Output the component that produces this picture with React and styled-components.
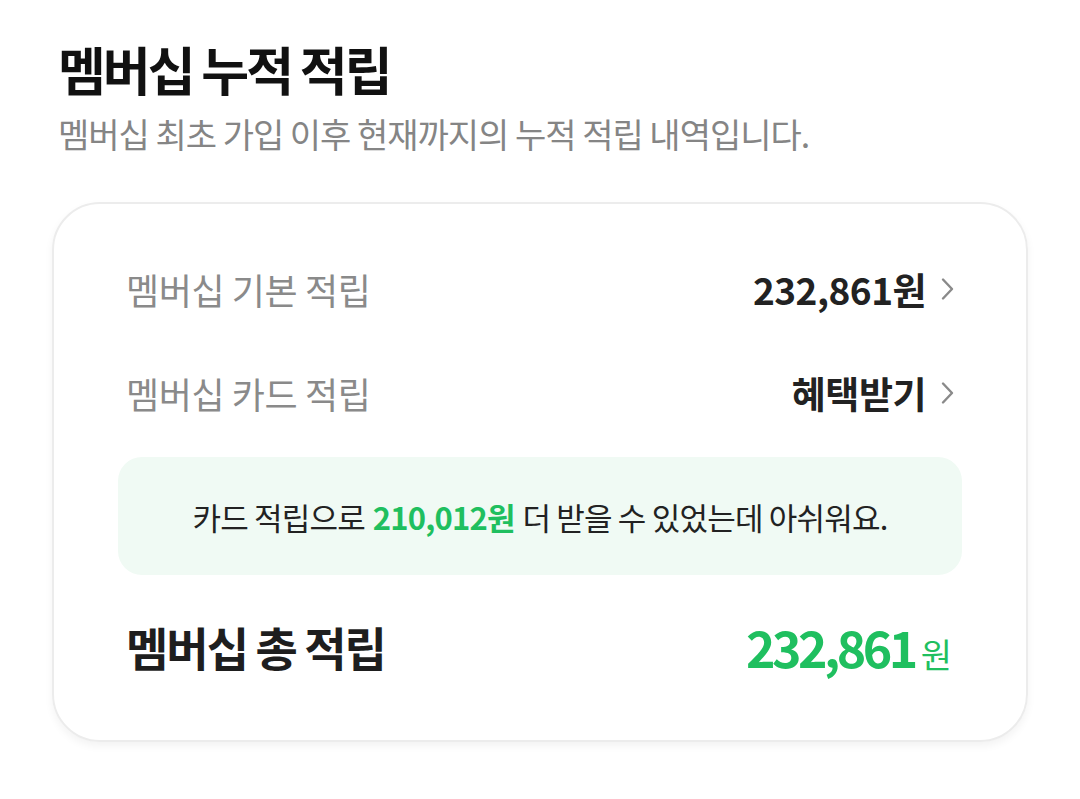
import React from 'react';
import styled, { createGlobalStyle } from 'styled-components';

const GlobalStyle = createGlobalStyle`
  body {
    margin: 0;
    background: #fff;
    font-family: 'Noto Sans CJK KR', 'Noto Sans', sans-serif;
    color: #222;
  }
`;

const rows = [
  { label: '멤버십 기본 적립', value: '232,861원' },
  { label: '멤버십 카드 적립', value: '혜택받기' },
];

const Chevron = () => (
  <svg width="17" height="26" viewBox="0 0 17 26" fill="none">
    <path d="M4 3.5l9 9.5-9 9.5" stroke="#8a8a8a" strokeWidth="2.4" strokeLinecap="round" strokeLinejoin="round" />
  </svg>
);

const App = () => {
  return (
    <>
      <GlobalStyle />
      <Page>
        <Header>
          <Title>멤버십 누적 적립</Title>
          <Subtitle>멤버십 최초 가입 이후 현재까지의 누적 적립 내역입니다.</Subtitle>
        </Header>

        <Card>
          {rows.map((row) => (
            <Row key={row.label}>
              <RowLabel>{row.label}</RowLabel>
              <RowValue>
                {row.value}
                <Chevron />
              </RowValue>
            </Row>
          ))}

          <Notice>
            카드 적립으로 <Green>210,012원</Green> 더 받을 수 있었는데 아쉬워요.
          </Notice>

          <TotalRow>
            <TotalLabel>멤버십 총 적립</TotalLabel>
            <TotalValue>
              232,861<Unit>원</Unit>
            </TotalValue>
          </TotalRow>
        </Card>
      </Page>
    </>
  );
};

export default App;

const Page = styled.div`
  width: 1080px;
  height: 799px;
  box-sizing: border-box;
  padding: 32px 52px 0;
`;

const Header = styled.div`
  display: flex;
  flex-direction: column;
  padding-left: 6px;
  margin-bottom: 40px;
`;

const Title = styled.h1`
  margin: 0;
  font-size: 52px;
  font-weight: 700;
  line-height: 74px;
  letter-spacing: -3px;
  color: #111;
`;

const Subtitle = styled.p`
  margin: 0;
  font-size: 34px;
  font-weight: 400;
  line-height: 56px;
  letter-spacing: -1px;
  color: #858585;
`;

const Card = styled.section`
  box-sizing: border-box;
  width: 976px;
  height: 540px;
  padding: 33px 64px 0;
  border: 2px solid #ececec;
  border-radius: 48px;
  box-shadow: 0 4px 8px rgba(0, 0, 0, 0.05);
  display: flex;
  flex-direction: column;
`;

const Row = styled.div`
  height: 104px;
  display: flex;
  align-items: center;
  justify-content: space-between;
  padding: 0 6px 0 8px;
`;

const RowLabel = styled.span`
  font-size: 36px;
  letter-spacing: -0.4px;
  color: #8a8a8a;
`;

const RowValue = styled.span`
  display: flex;
  align-items: center;
  gap: 13px;
  font-size: 37px;
  font-weight: 700;
  letter-spacing: -0.5px;
  color: #222;
`;

const Notice = styled.div`
  margin-top: 12px;
  height: 118px;
  border-radius: 24px;
  background: #f0faf4;
  display: flex;
  align-items: center;
  justify-content: center;
  font-size: 31px;
  letter-spacing: -0.8px;
  color: #222;
`;

const Green = styled.b`
  color: #1fbf5f;
  font-weight: 700;
  margin: 0 0.25em;
`;

const TotalRow = styled.div`
  height: 142px;
  display: flex;
  align-items: center;
  justify-content: space-between;
  padding: 0 10px 0 8px;
`;

const TotalLabel = styled.span`
  font-size: 46px;
  font-weight: 700;
  letter-spacing: -2px;
  color: #1e1e1e;
`;

const TotalValue = styled.span`
  display: flex;
  align-items: baseline;
  gap: 6px;
  font-size: 50px;
  font-weight: 700;
  letter-spacing: -3.5px;
  color: #1fbf5f;
`;

const Unit = styled.span`
  font-size: 34px;
  font-weight: 400;
  letter-spacing: 0;
`;
